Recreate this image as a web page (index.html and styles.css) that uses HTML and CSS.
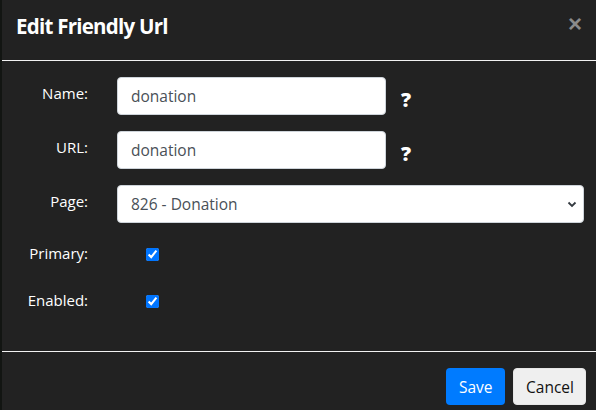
FILE: index.html
```html
<!DOCTYPE html>
<html>
<head>
<meta charset="utf-8">
<link rel="stylesheet" href="styles.css">
</head>
<body>
<div class="edge"></div>
<div class="modal">
  <div class="header">
    <h5 class="title">Edit Friendly Url</h5>
    <span class="close">×</span>
  </div>
  <div class="body">
    <div class="row">
      <label class="label">Name:</label>
      <div class="input short">donation</div>
      <span class="help">?</span>
    </div>
    <div class="row">
      <label class="label">URL:</label>
      <div class="input short">donation</div>
      <span class="help">?</span>
    </div>
    <div class="row">
      <label class="label">Page:</label>
      <div class="input select">826 - Donation
        <svg class="chev" width="10" height="8" viewBox="0 0 10 8"><path d="M1.5 2.5 L5 6 L8.5 2.5" fill="none" stroke="#343a40" stroke-width="1.8"/></svg>
      </div>
    </div>
    <div class="row check-row">
      <label class="label">Primary:</label>
      <input class="check" type="checkbox" checked>
    </div>
    <div class="row check-row">
      <label class="label">Enabled:</label>
      <input class="check" type="checkbox" checked>
    </div>
  </div>
  <div class="footer">
    <button class="btn save">Save</button>
    <button class="btn cancel">Cancel</button>
  </div>
</div>
</body>
</html>
```

FILE: styles.css
```css
html, body {
  margin: 0;
  padding: 0;
  height: 410px;
  overflow: hidden;
}
body {
  display: flex;
  background: #222222;
  font-family: "Open Sans", "Noto Sans", sans-serif;
  color: #ffffff;
}
.edge {
  width: 2px;
  background: #121512;
  flex: none;
}
.modal {
  flex: 1;
  display: flex;
  flex-direction: column;
  background: #222222;
}
.header {
  height: 60px;
  border-bottom: 1px solid #f2f2f2;
  display: flex;
  align-items: flex-start;
  justify-content: space-between;
  padding: 0 14px 0 14px;
  box-sizing: content-box;
}
.title {
  margin: 0;
  font-size: 20.5px;
  font-weight: 700;
  line-height: 28px;
  padding-top: 12px;
  letter-spacing: -0.75px;
}
.close {
  font-size: 24px;
  font-weight: 700;
  line-height: 24px;
  color: #8a8a8a;
  padding-top: 12px;
  font-family: "Liberation Sans", sans-serif;
}
.body {
  padding: 16px 12px 34px 0;
  display: flex;
  flex-direction: column;
  gap: 16px;
  height: 240px;
  box-sizing: content-box;
}
.row {
  display: flex;
  align-items: flex-start;
  height: 38px;
}
.label {
  width: 86px;
  text-align: right;
  font-size: 15px;
  line-height: 20px;
  padding-top: 6px;
  flex: none;
}
.input {
  margin-left: 29px;
  height: 38px;
  box-sizing: border-box;
  background: #fff;
  border: 1px solid #ced4da;
  border-radius: 4px;
  color: #495057;
  font-size: 15.5px;
  line-height: 20px;
  padding: 8px 13px;
  flex: none;
}
.short {
  width: 269px;
}
.select {
  flex: 1;
  display: flex;
  align-items: center;
  justify-content: space-between;
  padding-right: 6px;
  padding-top: 8px;
  padding-bottom: 8px;
}
.chev {
  display: block;
}
.help {
  margin-left: 15px;
  font-size: 20px;
  font-weight: 800;
  line-height: 22px;
  padding-top: 12px;
}
.check-row {
  height: 31px;
}
.check-row .label {
  padding-top: 4px;
}
.check {
  margin: 9px 0 0 58px;
  width: 13px;
  height: 13px;
}
.footer {
  border-top: 1px solid #f2f2f2;
  display: flex;
  justify-content: flex-end;
  gap: 8px;
  padding: 16px 10px 0 0;
}
.btn {
  height: 37px;
  border-radius: 4px;
  font-family: "Open Sans", "Noto Sans", sans-serif;
  font-size: 15.5px;
  padding: 0 12px;
  border: 1px solid transparent;
}
.save {
  background: #007bff;
  color: #fff;
  width: 59px;
}
.cancel {
  background: #efefef;
  color: #111;
  width: 73px;
  border-color: #e6e6e6;
}
```
